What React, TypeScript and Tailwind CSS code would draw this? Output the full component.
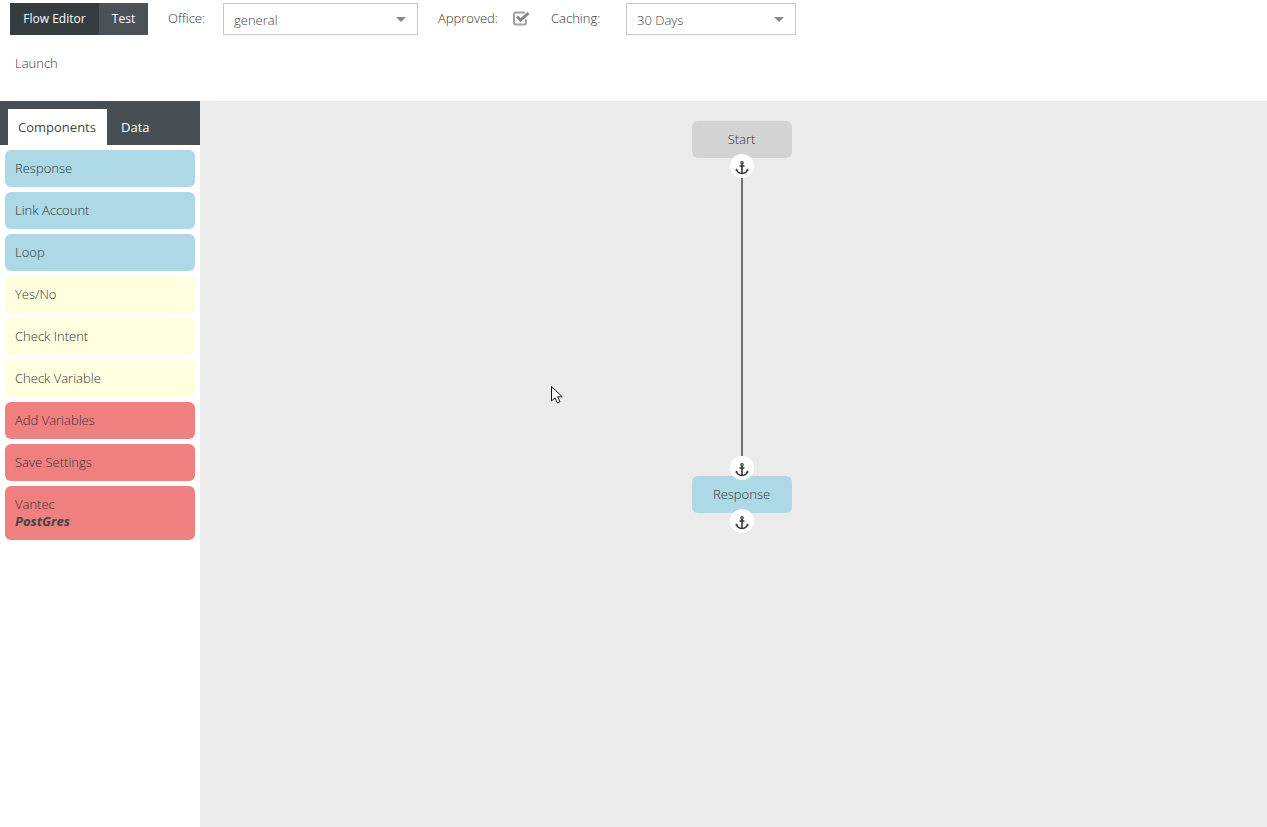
const components = [
  { label: "Response", color: "bg-[#add8e6]" },
  { label: "Link Account", color: "bg-[#add8e6]" },
  { label: "Loop", color: "bg-[#add8e6]" },
  { label: "Yes/No", color: "bg-[#ffffe0]" },
  { label: "Check Intent", color: "bg-[#ffffe0]" },
  { label: "Check Variable", color: "bg-[#ffffe0]" },
  { label: "Add Variables", color: "bg-[#f08080]" },
  { label: "Save Settings", color: "bg-[#f08080]" },
];

const Select = ({ value, width }: { value: string; width: string }) => (
  <div className={`${width} h-8 flex items-center justify-between border border-[#c8c8c8] pl-2.5 pr-[11px]`}>
    <span className="text-[#444] pt-[3px]">{value}</span>
    <span className="w-0 h-0 border-x-[5px] border-x-transparent border-t-[5px] border-t-[#888] mt-[1px]" />
  </div>
);

const Anchor = ({ top }: { top: number }) => (
  <div
    className="absolute left-[730px] w-6 h-6 pt-[3px] rounded-full bg-white flex items-center justify-center"
    style={{ top }}
  >
    <svg width="14" height="14" viewBox="0 0 14 14" fill="none" stroke="#333">
      <circle cx="7" cy="1.8" r="1.2" strokeWidth="1.1" />
      <path d="M7 3v9.5M4.5 5h5" strokeWidth="1.6" />
      <path d="M1.5 8.5c.4 2.4 3 3.8 5.5 4 2.500-.2 5.100-1.600 5.500-4" strokeWidth="1.5" />
      <path d="M0 9.500l1.500-2 1.500 2zM11 9.500l1.500-2 1.500 2z" fill="#333" stroke="none" />
    </svg>
  </div>
);

const App = () => {
  return (
    <div className="h-[827px] w-[1267px] overflow-hidden flex flex-col bg-white font-['Open_Sans',sans-serif] font-light text-[13px] text-[#333]">
      <header className="h-[101px] shrink-0">
        <div className="flex items-center pt-[3px]">
          <div className="flex ml-2.5 h-8 text-[12px] font-medium text-white">
            <div className="w-[89px] bg-[#353c40] flex items-center justify-center">Flow Editor</div>
            <div className="w-[49px] bg-[#4a5258] flex items-center justify-center">Test</div>
          </div>
          <span className="ml-5 w-[55px]">Office:</span>
          <Select value="general" width="w-[195px]" />
          <span className="ml-5 w-[75px]">Approved:</span>
          <svg width="17" height="15" viewBox="0 0 17 15" className="-mt-[1px]">
            <path
              d="M13 8.500v3a2 2 0 0 1-2 2H3a2 2 0 0 1-2-2V3.500a2 2 0 0 1 2-2h9"
              fill="none"
              stroke="#a0a0a0"
              strokeWidth="2"
            />
            <path d="M4 5.500l3.600 3.600L15.500 2" fill="none" stroke="#888" strokeWidth="3" />
          </svg>
          <span className="ml-[21px] w-[75px]">Caching:</span>
          <Select value="30 Days" width="w-[170px]" />
        </div>
        <div className="pl-[15px] mt-[19px] leading-[18px]">Launch</div>
      </header>
      <div className="flex flex-1 min-h-0">
        <aside className="w-[200px] shrink-0">
          <div className="h-11 bg-[#474f55] flex items-end pl-2 font-normal">
            <div className="w-[99px] h-9 bg-white text-[#444] flex items-center justify-center pt-[1px] pr-[1px]">
              Components
            </div>
            <div className="h-9 flex items-center pl-3.5 pt-[1px] text-white">Data</div>
          </div>
          <div className="flex flex-col gap-[5px] px-[5px] pt-[5px]">
            {components.map((item) => (
              <div key={item.label} className={`${item.color} h-[37px] rounded-md flex items-center px-2.5`}>
                {item.label}
              </div>
            ))}
            <div className="bg-[#f08080] h-[54px] rounded-md px-2.5 pt-[10px] leading-[17px]">
              <div>Vantec</div>
              <div className="font-bold italic text-[#444]">PostGres</div>
            </div>
          </div>
        </aside>
        <main className="flex-1 bg-[#ebebeb]" />
      </div>

      {/* nodes on the flow canvas */}
      <div className="absolute left-[692px] top-[121px] w-[100px] h-[37px] pr-[1px] rounded-md bg-[#d3d3d3] flex items-center justify-center">
        Start
      </div>
      <div className="absolute left-[741px] top-[178px] w-[2px] h-[278px] bg-[#707070]" />
      <div className="absolute left-[692px] top-[476px] w-[100px] h-[37px] pr-[1px] rounded-md bg-[#add8e6] flex items-center justify-center">
        Response
      </div>
      <Anchor top={154} />
      <Anchor top={456} />
      <Anchor top={509} />
      <svg width="14" height="20" viewBox="0 0 14 20" className="absolute left-[550px] top-[385px]">
        <path
          d="M1.500 1.500v14.500l3.500-3.200 2.400 5.200 2.600-1.200-2.400-5h4.600z"
          fill="#fff"
          stroke="#111"
          strokeWidth="1"
        />
      </svg>
    </div>
  );
};

export default App;
